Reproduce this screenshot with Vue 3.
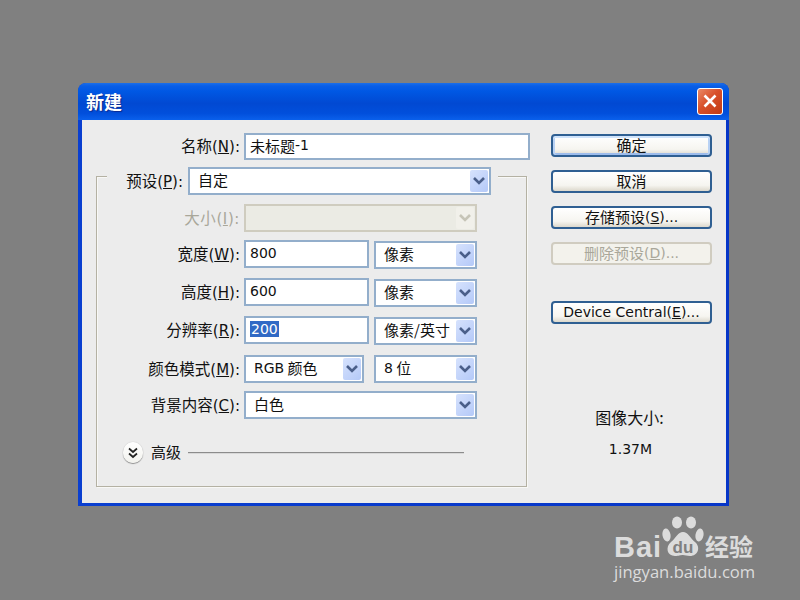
<script setup>
const rows = [
  { zh: '大小', key: 'I', cls: 'off', fields: [{ kind: 'select', cls: 'w233 disabled', text: '' }] },
  { zh: '宽度', key: 'W', cls: '', fields: [{ kind: 'input', cls: 'w125', text: '800' }, { kind: 'select', cls: 'w103 low', zh: '像素' }] },
  { zh: '高度', key: 'H', cls: 'gap2', fields: [{ kind: 'input', cls: 'w125', text: '600' }, { kind: 'select', cls: 'w103 low', zh: '像素' }] },
  { zh: '分辨率', key: 'R', cls: 'gap2', fields: [{ kind: 'input', cls: 'w125', sel: '200' }, { kind: 'select', cls: 'w103 low', zh: '像素/英寸' }] },
  { zh: '颜色模式', key: 'M', cls: 'gap3', fields: [{ kind: 'select', cls: 'w120', text: 'RGB', zh: ' 颜色' }, { kind: 'select', cls: 'w103', text: '8', zh: ' 位' }] },
  { zh: '背景内容', key: 'C', cls: '', fields: [{ kind: 'select', cls: 'w233', zh: '白色' }] },
]

const buttons = [
  { zh: '确定', cls: 'default' },
  { zh: '取消', cls: '' },
  { zh: '存储预设', key: 'S', cls: '' },
  { zh: '删除预设', key: 'D', cls: 'disabled' },
]
</script>

<template>
  <div class="page">
    <div class="dialog">
      <div class="titlebar">
        <span class="title">新建</span>
        <div class="close">
          <svg width="16" height="16" viewBox="0 0 16 16"><path d="M2.5 2.5 L13.5 13.5 M13.5 2.5 L2.5 13.5" stroke="#fff" stroke-width="2.6" fill="none"/></svg>
        </div>
      </div>
      <div class="client">
        <div class="left">
          <div class="name-row">
            <label class="label"><span class="zh">名称</span>(<u>N</u>):</label>
            <div class="field input w286"><span class="zh">未标题</span>-1</div>
          </div>
          <div class="group">
            <div class="preset">
              <label class="label"><span class="zh">预设</span>(<u>P</u>):</label>
              <div class="field select w303">
                <span class="zh">自定</span>
                <span class="arrow"><svg width="14" height="10" viewBox="0 0 14 10"><path d="M2 2 L7 7 L12 2" stroke="#4a5f8a" stroke-width="2.6" fill="none"/></svg></span>
              </div>
            </div>
            <div class="rows">
              <div v-for="r in rows" :key="r.key" class="row" :class="r.cls">
                <label class="label"><span class="zh">{{ r.zh }}</span>(<u>{{ r.key }}</u>):</label>
                <div class="fields">
                  <div v-for="(f, i) in r.fields" :key="i" class="field" :class="[f.kind, f.cls]">
                    <span v-if="f.sel" class="selected">{{ f.sel }}</span>
                    <span v-if="f.text">{{ f.text }}</span>
                    <span v-if="f.zh" class="zh">{{ f.zh }}</span>
                    <span v-if="f.kind === 'select'" class="arrow"><svg width="14" height="10" viewBox="0 0 14 10"><path d="M2 2 L7 7 L12 2" stroke="currentColor" stroke-width="2.6" fill="none"/></svg></span>
                  </div>
                </div>
              </div>
            </div>
            <div class="advanced">
              <span class="disclosure">
                <svg width="12" height="12" viewBox="0 0 12 12"><path d="M2 1.5 L6 5 L10 1.5 M2 6.5 L6 10 L10 6.5" stroke="#222" stroke-width="1.7" fill="none"/></svg>
              </span>
              <span class="zh">高级</span>
              <span class="rule"></span>
            </div>
          </div>
        </div>
        <div class="right">
          <div v-for="b in buttons" :key="b.zh" class="btn" :class="b.cls">
            <span class="zh">{{ b.zh }}</span><template v-if="b.key">(<u>{{ b.key }}</u>)...</template>
          </div>
          <div class="btn central">Device Central(<u>E</u>)...</div>
          <div class="info">
            <div class="zh">图像大小:</div>
            <div class="size">1.37M</div>
          </div>
        </div>
      </div>
    </div>

    <div class="logo">
      <div class="logo-top">
        <span class="bai">Bai</span>
        <svg class="paw" width="42" height="44" viewBox="0 0 42 44">
          <ellipse cx="4.5" cy="20" rx="4" ry="6.5" transform="rotate(-10 4.5 20)" fill="#dcdcdc"/>
          <ellipse cx="15" cy="7.5" rx="5" ry="6" fill="#dcdcdc"/>
          <ellipse cx="29" cy="7.5" rx="5" ry="6" fill="#dcdcdc"/>
          <ellipse cx="37.5" cy="20" rx="4" ry="6.5" transform="rotate(10 37.5 20)" fill="#dcdcdc"/>
          <path d="M21 17 C26 17 28 23 33 27 C39 32 36 41 28 41 C25 41 23 40 21 40 C18 40 17 41 13 41 C5 41 3 32 9 27 C14 23 16 17 21 17 Z" fill="#dcdcdc"/>
          <text x="21" y="37.5" text-anchor="middle" class="du">du</text>
        </svg>
        <span class="jy">经验</span>
      </div>
      <div class="url">jingyan.baidu.com</div>
    </div>
  </div>
</template>

<style scoped>
.page {
  position: relative;
  width: 800px;
  height: 600px;
  overflow: hidden;
  background: #808080;
  font-family: "DejaVu Sans", sans-serif;
  font-size: 14px;
  color: #111;
  padding-top: 83px;
  box-sizing: border-box;
}

.zh {
  font-family: "Noto Sans CJK SC", sans-serif;
  font-size: 15px;
  white-space: pre;
}

.dialog {
  width: 651px;
  height: 423px;
  margin-left: 78px;
  box-sizing: border-box;
  padding: 0 3px 3px 4px;
  background: linear-gradient(90deg, #0a3fd0, #0736c8);
  border-radius: 8px 8px 0 0;
}

.titlebar {
  display: flex;
  align-items: center;
  justify-content: space-between;
  height: 37px;
  margin: 0 -3px 0 -4px;
  padding: 0 6px 1px 8px;
  box-sizing: border-box;
  border-radius: 8px 8px 0 0;
  background: linear-gradient(180deg, #1c6fe8 0, #0a5ee6 8%, #0058e4 22%, #0149d2 55%, #014fdc 82%, #0a60ec 100%);
}

.title {
  font-family: "Noto Sans CJK SC", sans-serif;
  font-size: 18px;
  font-weight: 700;
  color: #fff;
  text-shadow: 1px 1px 1px #0a2a90;
}

.close {
  display: flex;
  align-items: center;
  justify-content: center;
  width: 26px;
  height: 27px;
  box-sizing: border-box;
  border: 1px solid #fff;
  border-radius: 3px;
  background: linear-gradient(135deg, #ea8a68, #d8502a 45%, #c23a14);
}

.client {
  display: flex;
  height: 383px;
  background: #ececec;
}

.left {
  width: 445px;
  margin-left: 14px;
}

.label {
  display: block;
  flex: none;
  padding-bottom: 3px;
  font-size: 15px;
  text-align: right;
  white-space: nowrap;
}

.label .zh {
  font-size: 15.5px;
}

.name-row {
  display: flex;
  align-items: center;
  gap: 4px;
  margin-top: 13px;
}

.name-row .label {
  width: 144px;
}

.group {
  width: 431px;
  height: 311px;
  margin-top: 16px;
  box-sizing: border-box;
  padding: 1px;
  border: 1px solid #b4b1a3;
  box-shadow: inset 1px 1px 0 #f8f8f6, 1px 1px 0 #f8f8f6;
}

.preset {
  display: flex;
  align-items: center;
  justify-content: flex-end;
  gap: 5px;
  width: 391px;
  margin: -11px 0 0 9px;
  padding-right: 7px;
  box-sizing: border-box;
  background: #ececec;
}

.rows {
  display: flex;
  flex-direction: column;
  gap: 8px;
  margin-top: 9px;
}

.row {
  display: flex;
  align-items: center;
  gap: 4px;
}

.row .label {
  width: 142px;
}

.row.gap2 {
  margin-top: 2px;
}

.row.gap3 {
  margin-top: 3px;
}

.row.off .label {
  color: #a9a79a;
  letter-spacing: 0.6px;
}

.fields {
  display: flex;
  justify-content: space-between;
  width: 233px;
}

.field {
  position: relative;
  display: flex;
  align-items: center;
  height: 28px;
  box-sizing: border-box;
  padding-bottom: 3px;
  border: 2px solid #93aecb;
  background: #fff;
  white-space: pre;
}

.input {
  padding-left: 4px;
}

.select {
  padding-left: 8px;
}

.low {
  margin: 1px 0 -1px;
}

.w286 {
  width: 286px;
  height: 27px;
}

.w303 {
  width: 303px;
}

.w233 {
  width: 233px;
}

.w125 {
  width: 125px;
}

.w120 {
  width: 120px;
}

.w103 {
  width: 103px;
}

.arrow {
  position: absolute;
  top: 1px;
  right: 1px;
  bottom: 1px;
  width: 18px;
  display: flex;
  align-items: center;
  justify-content: center;
  border-radius: 2px;
  color: #4a5f8a;
  background: linear-gradient(135deg, #d6e2fd, #b4c9f8);
}

.select.disabled {
  border-color: #cfccbf;
  background: #ebebe4;
}

.select.disabled .arrow {
  color: #c6c4b7;
  background: #f1f0ea;
}

.selected {
  padding: 0 1px;
  color: #fff;
  background: #316ac5;
}

.advanced {
  display: flex;
  align-items: center;
  margin: 23px 0 0 25px;
  height: 21px;
}

.advanced .zh {
  padding-bottom: 2px;
}

.disclosure {
  display: flex;
  align-items: center;
  justify-content: center;
  width: 20px;
  height: 21px;
  margin-right: 8px;
  border-radius: 50%;
  background: linear-gradient(180deg, #fff, #f2f2ee);
  box-shadow: 0 1px 1px #8d8d8d, 0 0 1px #a8a8a8;
}

.rule {
  width: 276px;
  height: 1px;
  margin: 0 0 1px 7px;
  background: #8c8c8c;
  box-shadow: 0 1px 0 #d8d8d8;
}

.right {
  display: flex;
  flex-direction: column;
  gap: 13px;
  width: 161px;
  margin: 14px 0 0 10px;
}

.btn {
  display: flex;
  align-items: center;
  justify-content: center;
  height: 23px;
  box-sizing: border-box;
  padding-bottom: 2px;
  border: 2px solid #2f5f92;
  border-radius: 4px;
  background: linear-gradient(180deg, #fff, #f6f5f0 70%, #dcd8cc);
  white-space: pre;
}

.btn.default {
  box-shadow: inset 0 2px 0 #cfe3fb, inset 2px 0 0 #b9d2f4, inset -2px 0 0 #b9d2f4, inset 0 -2px 0 #9dbcec;
}

.btn.disabled {
  border-color: #d0ccc0;
  background: #f3f2ec;
  color: #a9a79a;
}

.btn.central {
  margin-top: 23px;
}

.info {
  display: flex;
  flex-direction: column;
  align-items: center;
  gap: 10px;
  margin: 68px 0 0 -4px;
}

.info .zh {
  font-size: 16px;
}

.size {
  margin-left: 2px;
  line-height: 20px;
}

.logo {
  position: absolute;
  left: 614px;
  top: 515px;
  width: 142px;
  color: #dcdcdc;
}

.logo-top {
  display: flex;
  align-items: flex-end;
  height: 44px;
}

.bai {
  width: 48px;
  font-family: "Liberation Sans", sans-serif;
  font-size: 29px;
  font-weight: 700;
  line-height: 24px;
  letter-spacing: 1px;
}

.paw {
  flex: none;
}

.du {
  font-family: "Liberation Sans", sans-serif;
  font-size: 17px;
  font-weight: 700;
  fill: #808080;
}

.jy {
  margin-left: 1px;
  font-family: "Noto Sans CJK SC", sans-serif;
  font-size: 24px;
  font-weight: 700;
  line-height: 26px;
}

.url {
  margin-top: 3px;
  font-family: "Open Sans", sans-serif;
  font-size: 16.6px;
  line-height: 20px;
  white-space: nowrap;
}
</style>
